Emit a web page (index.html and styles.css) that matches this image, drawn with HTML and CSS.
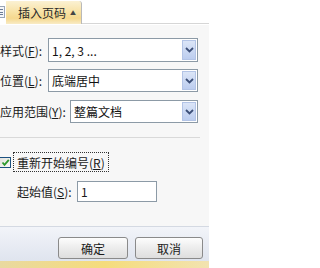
FILE: index.html
```html
<!DOCTYPE html>
<html lang="zh-CN">
<head>
<meta charset="utf-8">
<link rel="stylesheet" href="styles.css">
</head>
<body>
<div class="screen">
  <div class="tabbar">
    <div class="tab-icon"><span></span><span></span><span></span></div>
    <div class="tab">插入页码 <span class="tab-arrow">▲</span></div>
    <div class="tab-rest"></div>
  </div>
  <div class="panel">
    <div class="row">
      <label class="lbl w48">样式(<u>F</u>):</label>
      <div class="combo"><span class="val">1, 2, 3 ...</span>
        <span class="drop"><svg width="9" height="6" viewBox="0 0 9 6"><path d="M1 1 L4.5 4.5 L8 1" fill="none" stroke="#3c4f78" stroke-width="1.8"/></svg></span>
      </div>
    </div>
    <div class="row">
      <label class="lbl w48">位置(<u>L</u>):</label>
      <div class="combo short"><span class="val">底端居中</span>
        <span class="drop"><svg width="9" height="6" viewBox="0 0 9 6"><path d="M1 1 L4.5 4.5 L8 1" fill="none" stroke="#3c4f78" stroke-width="1.8"/></svg></span>
      </div>
    </div>
    <div class="row">
      <label class="lbl w70">应用范围(<u>Y</u>):</label>
      <div class="combo short"><span class="val">整篇文档</span>
        <span class="drop"><svg width="9" height="6" viewBox="0 0 9 6"><path d="M1 1 L4.5 4.5 L8 1" fill="none" stroke="#3c4f78" stroke-width="1.8"/></svg></span>
      </div>
    </div>
    <div class="sep"></div>
    <div class="check-row">
      <span class="checkbox"><svg width="9" height="9" viewBox="0 0 9 9"><path d="M1.5 4.5 L3.5 6.8 L7.8 1.8" fill="none" stroke="#2f9a2f" stroke-width="1.8"/></svg></span>
      <span class="check-label">重新开始编号(<u>R</u>)</span>
    </div>
    <div class="start-row">
      <label class="lbl">起始值(<u>S</u>):</label>
      <div class="input">1</div>
    </div>
  </div>
  <div class="footer">
    <button class="btn">确定</button>
    <button class="btn">取消</button>
  </div>
  <div class="strip"></div>
</div>
</body>
</html>
```
FILE: styles.css
```css
html, body {
  margin: 0;
  padding: 0;
  background: #ffffff;
}
.screen {
  width: 209px;
  height: 268px;
  overflow: hidden;
  display: flex;
  flex-direction: column;
  font-family: "Noto Sans CJK SC", "Liberation Sans", sans-serif;
  font-size: 12px;
  color: #1a1a1a;
}
u { text-decoration: underline; }

.tabbar {
  height: 24px;
  display: flex;
  align-items: flex-end;
  flex: none;
  background: #ffffff;
}
.tab-icon {
  width: 5px;
  height: 12px;
  margin-bottom: 6px;
  border: 1px solid #9aa6b8;
  border-left: none;
  background: #f4f6fa;
  display: flex;
  flex-direction: column;
  justify-content: space-evenly;
  padding: 1px 0;
  box-sizing: border-box;
}
.tab-icon span {
  display: block;
  height: 1px;
  background: #6b7b95;
  margin-right: 1px;
}
.tab {
  width: 76px;
  height: 23px;
  margin-left: 1px;
  box-sizing: border-box;
  padding-left: 12px;
  display: flex;
  align-items: center;
  background: linear-gradient(to bottom, #fbf1d3 0%, #f8e3a8 45%, #f5d88e 75%, #f9ecc6 100%);
  border-right: 1px solid #b9b9b9;
  border-top-right-radius: 3px;
  color: #2a2a2a;
  font-size: 12px;
  gap: 3px;
}
.tab-arrow {
  font-size: 6px;
  color: #444;
  margin-left: 1px;
}
.tab-rest {
  flex: 1;
  height: 1px;
  background: #d6d6d6;
  margin-bottom: 0;
}

.panel {
  height: 202px;
  flex: none;
  box-sizing: border-box;
  background: #f7f7f7;
  border-top: 1px solid #ffffff;
  padding: 13px 11px 0 0;
  display: flex;
  flex-direction: column;
}
.row {
  display: flex;
  align-items: center;
  height: 24px;
  margin-bottom: 7px;
}
.row + .row { height: 23px; margin-bottom: 8px; }
.lbl {
  flex: none;
  white-space: nowrap;
  color: #1a1a1a;
}
.w48 { width: 48px; }
.w70 { width: 70px; }
.combo {
  flex: 1;
  height: 100%;
  box-sizing: border-box;
  border: 1px solid #8c9aa6;
  background: #ffffff;
  display: flex;
  align-items: center;
  justify-content: space-between;
  padding: 0 1px 0 3px;
}
.val { color: #111; }
.drop {
  width: 14px;
  height: calc(100% - 2px);
  box-sizing: border-box;
  margin-right: 0;
  border: 1px solid #b3c4e6;
  background: linear-gradient(to bottom, #dbe5f7, #bccdef);
  display: flex;
  align-items: center;
  justify-content: center;
}
.sep {
  height: 1px;
  background: #d9d9d9;
  margin: 6px -2px 0 0;
}
.check-row {
  display: flex;
  align-items: center;
  height: 20px;
  margin-top: 14px;
}
.checkbox {
  width: 11px;
  height: 11px;
  box-sizing: border-box;
  border: 1px solid #1c5180;
  border-left: none;
  background: linear-gradient(135deg, #e2e2dd, #fbfbf9);
  display: flex;
  align-items: center;
  justify-content: center;
}
.check-label {
  margin-left: 2px;
  height: 20px;
  box-sizing: border-box;
  border: 1px dotted #333;
  padding: 0 3px;
  display: flex;
  align-items: center;
}
.start-row {
  display: flex;
  align-items: center;
  height: 21px;
  margin-top: 9px;
  padding-left: 17px;
}
.start-row .lbl { width: 60px; }
.input {
  width: 80px;
  height: 21px;
  box-sizing: border-box;
  border: 1px solid #8c9aa6;
  background: #fff;
  padding-left: 3px;
  display: flex;
  align-items: center;
}

.footer {
  flex: none;
  height: 35px;
  box-sizing: border-box;
  border-top: 1px solid #d4d9e2;
  background: linear-gradient(to bottom, #f2f4f9, #dfe4ee);
  display: flex;
  justify-content: flex-end;
  align-items: flex-end;
  padding: 0 6px 2px 0;
  gap: 7px;
}
.btn {
  width: 70px;
  height: 22px;
  margin: 0;
  box-sizing: border-box;
  border: 1px solid #8a8a8a;
  border-radius: 3px;
  background: linear-gradient(to bottom, #fdfdfd 0%, #ececec 50%, #dedede 100%);
  font-family: "Noto Sans CJK SC", "Liberation Sans", sans-serif;
  font-size: 12px;
  color: #1a1a1a;
  padding: 0;
}
.btn + .btn { width: 68px; }
.strip {
  flex: 1;
  background: linear-gradient(to right, #e9d9a0, #f5dc7c 50%, #f2e3b0);
}
```
